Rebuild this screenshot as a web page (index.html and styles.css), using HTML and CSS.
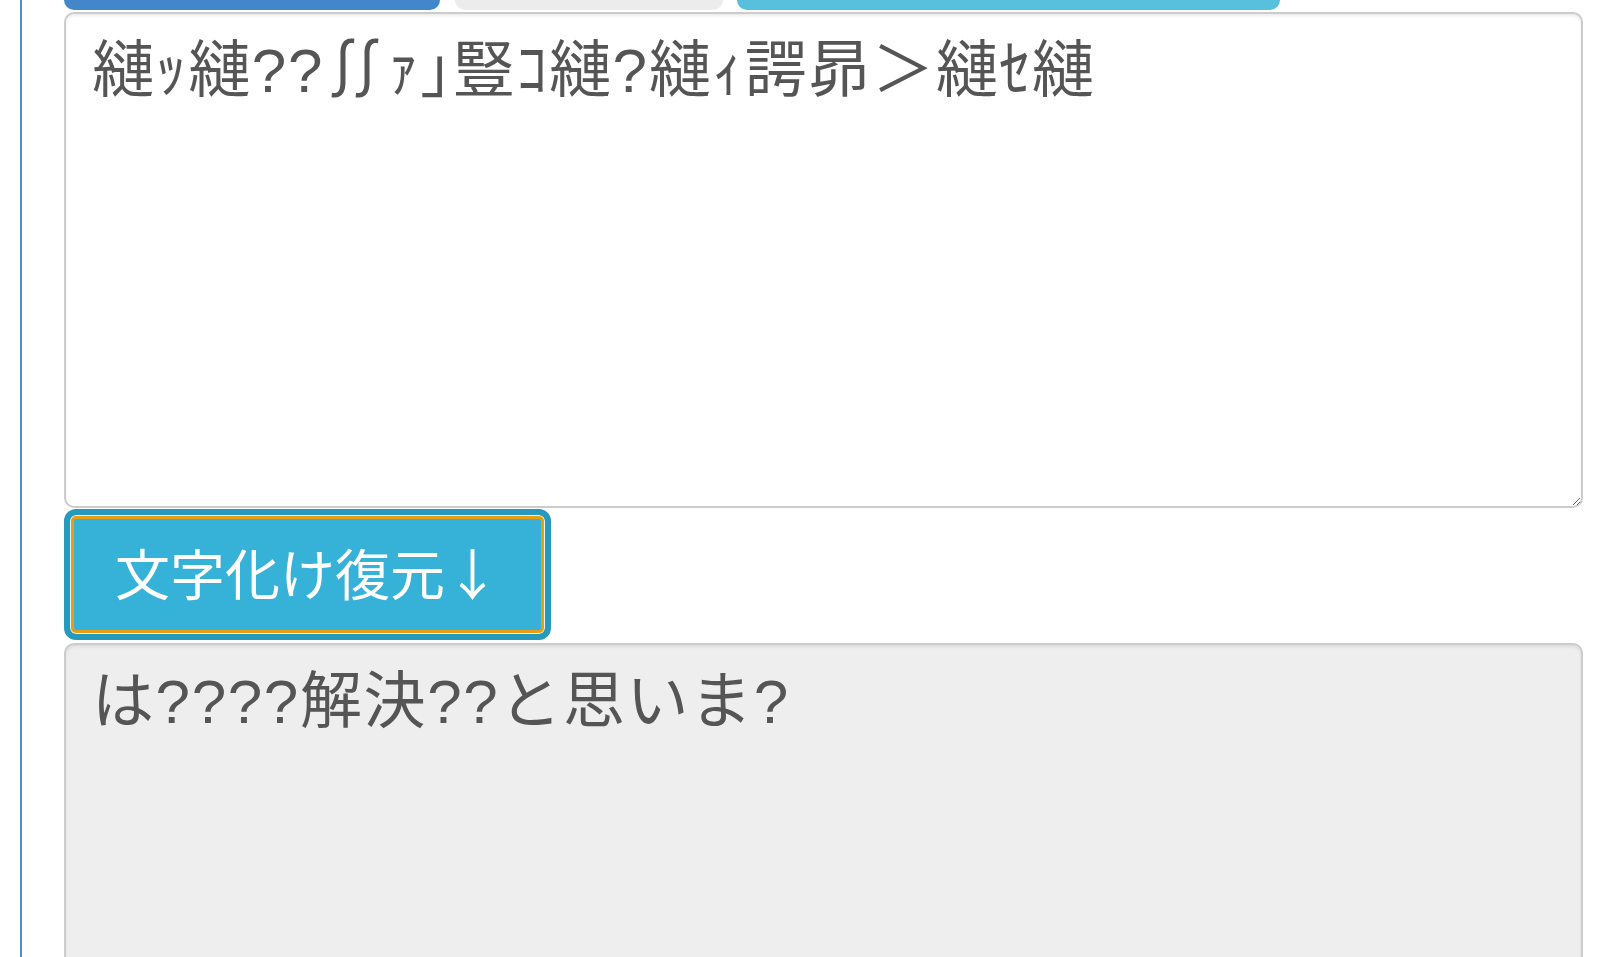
FILE: index.html
```html
<!DOCTYPE html>
<html lang="ja">
<head>
    <meta charset="UTF-8">
    <meta name="viewport" content="width=device-width, initial-scale=1.0">
    <title>文字化け復元</title>
    <link rel="stylesheet" href="styles.css">
</head>
<body>

    <div class="panel">
        <div class="tool-row">
            <button type="button" class="tool tool-primary"></button>
            <button type="button" class="tool tool-default"></button>
            <button type="button" class="tool tool-info"></button>
        </div>

        <textarea class="text-box" id="source" spellcheck="false">縺ｯ縺??∬ｧ｣豎ｺ縺?縺ｨ諤昴＞縺ｾ縺</textarea>

        <button type="button" class="restore-btn" id="restore">文字化け復元↓</button>

        <textarea class="text-box result" id="result" readonly>は????解決??と思いま?</textarea>
    </div>

</body>
</html>
```

FILE: styles.css
```css
* {
    box-sizing: border-box;
    margin: 0;
    padding: 0;
}

body {
    background: #fff;
    color: #555;
    font-family: "Noto Sans CJK JP", "Noto Sans", sans-serif;
    height: 100vh;
    overflow: hidden;
}

.panel {
    margin-left: 20px;
    border-left: 2px solid #4a8ed3;
    height: 100%;
    padding: 0 33px 0 42px;
    display: flex;
    flex-direction: column;
}

/* buttons of the row above, scrolled mostly out of view */
.tool-row {
    display: flex;
    flex-shrink: 0;
    height: 10px;
    margin-bottom: 2px;
}

.tool {
    border: none;
    border-radius: 0 0 12px 12px;
    height: 10px;
}

.tool-primary {
    width: 376px;
    background: #4287c9;
}

.tool-default {
    width: 268px;
    margin-left: 15px;
    background: #ececec;
}

.tool-info {
    width: 543px;
    margin-left: 14px;
    background: #58bfdd;
}

.text-box {
    display: block;
    flex-shrink: 0;
    width: 100%;
    height: 496px;
    padding: 13px 26px 8px;
    border: 2px solid #ccc;
    border-radius: 10px;
    box-shadow: inset 0 2px 3px rgba(0, 0, 0, 0.08);
    background: #fff;
    color: #555;
    font-family: "Liberation Sans", "Noto Sans CJK JP", sans-serif;
    font-size: 62px;
    line-height: 1.43;
    letter-spacing: 1.6px;
    outline: none;
}

.result {
    background: #eee;
    margin-top: 3px;
}

.restore-btn {
    align-self: flex-start;
    flex-shrink: 0;
    margin-top: 1px;
    height: 131px;
    padding: 0 45px 8px;
    border: 6px solid #269abc;
    border-radius: 12px;
    background: #36b1d7;
    color: #fff;
    font-family: "Noto Sans CJK JP", "Noto Sans", sans-serif;
    font-size: 55px;
    box-shadow: inset 0 0 0 1px #e9f5f8, inset 0 0 0 4px #e89e12;
    cursor: pointer;
}
```
